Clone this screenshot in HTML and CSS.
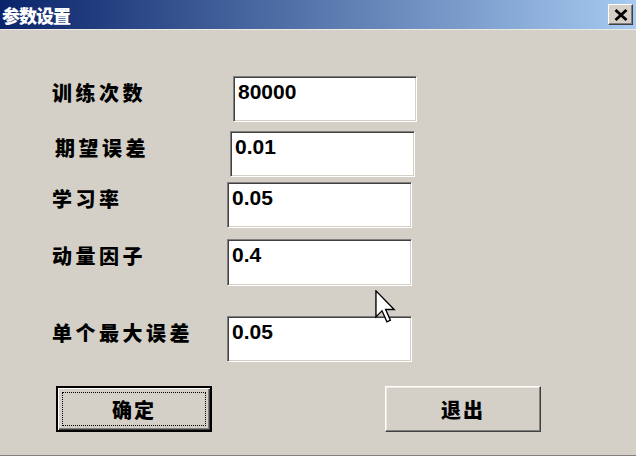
FILE: index.html
```html
<!DOCTYPE html>
<html lang="zh-CN">
<head>
  <meta charset="UTF-8">
  <meta name="viewport" content="width=device-width, initial-scale=1">
  <title>参数设置</title>
  <link rel="stylesheet" href="styles.css">
</head>
<body>
  <div class="dialog">
    <div class="titlebar">
      <span class="title">参数设置</span>
      <button class="close" aria-label="关闭">
        <svg width="14" height="12" viewBox="0 0 14 12">
          <path d="M1.5 1 L12.5 11 M12.5 1 L1.5 11" stroke="#000" stroke-width="2.8" fill="none"/>
        </svg>
      </button>
    </div>

    <div class="form">
      <div class="row row1">
        <label class="label">训练次数</label>
        <div class="field">80000</div>
      </div>
      <div class="row row2">
        <label class="label">期望误差</label>
        <div class="field">0.01</div>
      </div>
      <div class="row row3">
        <label class="label">学习率</label>
        <div class="field">0.05</div>
      </div>
      <div class="row row4">
        <label class="label">动量因子</label>
        <div class="field">0.4</div>
      </div>
      <div class="row row5">
        <label class="label">单个最大误差</label>
        <div class="field">0.05</div>
      </div>

      <div class="actions">
        <button class="btn default"><span class="focus">确定</span></button>
        <button class="btn">退出</button>
      </div>
    </div>

    <svg class="cursor" width="21" height="33" viewBox="0 0 12 19">
      <path d="M0.5 0.5 L0.5 15.5 L4 12 L6.8 18.3 L8.8 17.4 L6.1 11.2 L11 11.2 Z" fill="#fff" stroke="#000" stroke-width="0.8" stroke-linejoin="miter"/>
    </svg>
  </div>
</body>
</html>
```

FILE: styles.css
```css
body {
  margin: 0;
  background: #d4d0c8;
  font-family: "Liberation Sans", "Noto Sans CJK SC", sans-serif;
}

.dialog {
  position: relative;
  width: 636px;
  height: 456px;
  background: #d4d0c8;
  border-bottom: 1px solid #808080;
  box-sizing: border-box;
  overflow: hidden;
}

.titlebar {
  height: 29px;
  display: flex;
  align-items: center;
  justify-content: space-between;
  padding: 0 3px 0 2px;
  background: linear-gradient(to right, #0a246a, #a6caf0);
  border-bottom: 1px solid #eeeae2;
}

.title {
  color: #fff;
  font-family: "Noto Sans CJK SC", sans-serif;
  font-weight: 900;
  font-size: 18px;
  line-height: 20px;
  letter-spacing: -1px;
}

.close {
  width: 25px;
  height: 21px;
  padding: 0;
  margin: 0;
  display: flex;
  align-items: center;
  justify-content: center;
  background: #d4d0c8;
  border: 1px solid;
  border-color: #fff #404040 #404040 #fff;
  box-shadow: inset -1px -1px 0 #808080;
}

.form {
  padding-left: 52px;
}

.row {
  display: flex;
  align-items: flex-start;
}

.label {
  flex: 0 0 175px;
  margin-top: 7px;
  font-family: "Noto Sans CJK SC", sans-serif;
  font-weight: 900;
  font-size: 20px;
  line-height: 20px;
  letter-spacing: 3.5px;
  color: #000;
}

.field {
  width: 185px;
  height: 46px;
  box-sizing: border-box;
  padding: 3px 0 0 4px;
  background: #fff;
  border: 1px solid;
  border-color: #808080 #fff #fff #808080;
  box-shadow: inset 1px 1px 0 #404040, inset -1px -1px 0 #d4d0c8;
  font-weight: bold;
  font-size: 21px;
  line-height: 24px;
  color: #000;
}

.row1 { margin-top: 46px; }
.row1 .label { flex-basis: 181px; }
.row1 .field { width: 184px; }

.row2 { margin-top: 9px; }
.row2 .label { flex-basis: 175px; padding-left: 3px; }

.row3 { margin-top: 5px; }
.row4 { margin-top: 11px; }
.row4 .field { height: 47px; }
.row5 { margin-top: 30px; }

.actions {
  display: flex;
  gap: 173px;
  margin-top: 24px;
  padding-left: 4px;
}

.btn {
  width: 156px;
  height: 46px;
  padding: 0;
  margin: 0;
  background: #d4d0c8;
  border: 1px solid;
  border-color: #fff #404040 #404040 #fff;
  box-shadow: inset -1px -1px 0 #808080, inset 1px 1px 0 #eeeae2;
  font-family: "Noto Sans CJK SC", sans-serif;
  font-weight: 900;
  font-size: 20px;
  letter-spacing: 2px;
  color: #000;
}

.btn.default {
  border: 2px solid #000;
  box-shadow: inset 1px 1px 0 #fff, inset -1px -1px 0 #404040, inset -2px -2px 0 #808080;
  display: flex;
  padding: 4px;
  box-sizing: border-box;
}

.focus {
  flex: 1;
  display: flex;
  align-items: center;
  justify-content: center;
  border: 1px dotted #000;
}

.cursor {
  position: absolute;
  left: 375px;
  top: 290px;
}
```
